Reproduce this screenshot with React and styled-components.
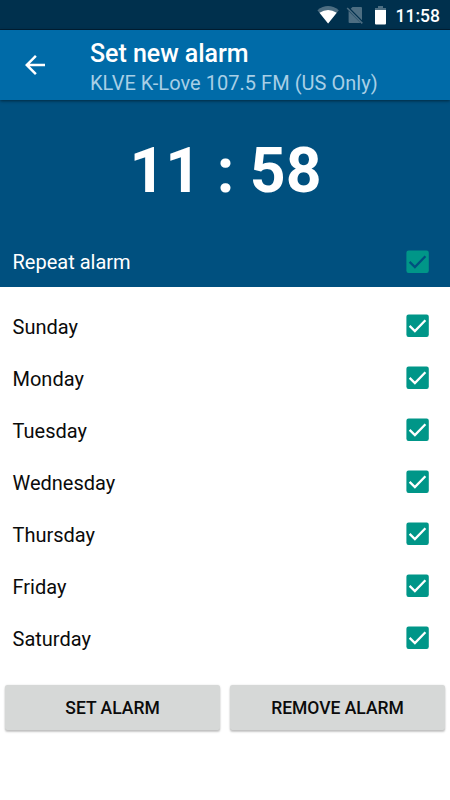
import React from 'react';
import styled, { createGlobalStyle } from 'styled-components';

const GlobalStyle = createGlobalStyle`
  * { box-sizing: border-box; }
  body { margin: 0; background: #fff; font-family: Roboto, sans-serif; color: #0b0b0b; }
`;

const Screen = styled.div`
  display: flex;
  flex-direction: column;
  width: 450px;
  height: 800px;
  overflow: hidden;
  background: #fff;
`;

const StatusBar = styled.div`
  display: flex;
  align-items: center;
  justify-content: flex-end;
  height: 30px;
  padding-right: 10px;
  background: #00304d;
  border-bottom: 1px solid #001f35;
  color: #fff;
`;

const StatusIcons = styled.svg`
  display: block;
  width: 78px;
  height: 29px;
  margin-right: 1px;
`;

const Clock = styled.span`
  height: 29px;
  padding-top: 2px;
  font-size: 17.5px;
  font-weight: 500;
  line-height: 29px;
`;

const AppBar = styled.header`
  display: flex;
  position: relative;
  height: 70px;
  background: #006ba8;
  box-shadow: 0 1px 3px rgba(0, 0, 0, 0.5);
`;

const BackButton = styled.button`
  display: flex;
  width: 90px;
  height: 70px;
  padding: 20px;
  border: 0;
  background: none;
  svg { display: block; width: 30px; height: 30px; }
`;

const Titles = styled.div`
  display: flex;
  flex-direction: column;
  padding-top: 9px;
`;

const Title = styled.h1`
  margin: 0;
  color: #fff;
  font-size: 25px;
  font-weight: 500;
  line-height: 30px;
  letter-spacing: -0.04px;
`;

const Subtitle = styled.div`
  color: #a8cfe6;
  font-size: 20px;
  line-height: 28px;
  letter-spacing: 0.035px;
`;

const Hero = styled.section`
  display: flex;
  flex-direction: column;
  height: 187px;
  background: #00507f;
  color: #fff;
`;

const Time = styled.div`
  height: 136px;
  padding: 3px 0 0 1px;
  font-size: 62.5px;
  font-weight: 700;
  line-height: 136px;
  text-align: center;
`;

const Days = styled.div`
  display: flex;
  flex-direction: column;
  padding-top: 13px;
`;

const Row = styled.label`
  display: flex;
  align-items: center;
  justify-content: space-between;
  height: 52px;
  padding: 0 21px 0 12.5px;
  font-size: 20px;
  line-height: 24px;
`;

const DayName = styled.span`
  padding-top: 2px;
`;

const Check = styled.svg`
  display: block;
  width: 23px;
  height: 24px;
`;

const Actions = styled.div`
  display: flex;
  gap: 10px;
  padding: 21px 5px 0;
`;

const ActionButton = styled.button`
  flex: 1 1 0;
  height: 45px;
  padding: 1px 0 0;
  border: 0;
  border-radius: 2.5px;
  background: #d6d8d7;
  box-shadow: 0 2px 2px rgba(0, 0, 0, 0.22), 0 0 2px rgba(0, 0, 0, 0.12);
  color: #0b0b0b;
  font: 500 17.5px/45px Roboto, sans-serif;
`;

function CheckBox({ mark = '#fff', fill = '#009688' }) {
  return (
    <Check viewBox="0 0 23 24">
      <rect x="0.4" y="0.6" width="22.4" height="22.4" rx="2.2" fill={fill} />
      <path d="M3.6 11.9 L8.9 17.1 L19.4 6.2" fill="none" stroke={mark} strokeWidth="2.3" />
    </Check>
  );
}

const days = ['Sunday', 'Monday', 'Tuesday', 'Wednesday', 'Thursday', 'Friday', 'Saturday'];

export default function App() {
  return (
    <>
      <GlobalStyle />
      <Screen>
        <StatusBar>
          <StatusIcons viewBox="317 0 78 29">
            <path d="M317.4 10.2 Q328 2 338.8 10.2 L328.1 23.4 Z" fill="#4d6e82" />
            <path d="M319.5 12.8 Q328.1 7.2 336.7 12.8 L328.1 23.4 Z" fill="#fff" />
            <path d="M352.5 7 H361 Q362 7 362 8 V20.2 L350.7 8.8 Z M348.6 11 L360.6 23 H349.6 Q348.6 23 348.6 22 Z" fill="#4d6e82" />
            <path d="M347.2 8 L362.3 23.4" stroke="#4d6e82" strokeWidth="1.6" />
            <path d="M378 6 H383 V8 H386 V11 H375 V8 H378 Z" fill="#4d6e82" />
            <path d="M375 10 H386 V23.5 Q386 24.5 385 24.5 H376 Q375 24.5 375 23.5 Z" fill="#fff" />
          </StatusIcons>
          <Clock>11:58</Clock>
        </StatusBar>
        <AppBar>
          <BackButton aria-label="Back">
            <svg viewBox="0 0 24 24">
              <path d="M20 11H7.83l5.59-5.59L12 4l-8 8 8 8 1.41-1.41L7.83 13H20v-2z" fill="#fff" />
            </svg>
          </BackButton>
          <Titles>
            <Title>Set new alarm</Title>
            <Subtitle>KLVE K-Love 107.5 FM (US Only)</Subtitle>
          </Titles>
        </AppBar>
        <Hero>
          <Time>11 : 58</Time>
          <Row>
            <span>Repeat alarm</span>
            <CheckBox mark="#00507f" />
          </Row>
        </Hero>
        <Days>
          {days.map((day) => (
            <Row key={day}>
              <DayName>{day}</DayName>
              <CheckBox />
            </Row>
          ))}
        </Days>
        <Actions>
          <ActionButton>SET ALARM</ActionButton>
          <ActionButton>REMOVE ALARM</ActionButton>
        </Actions>
      </Screen>
    </>
  );
}
